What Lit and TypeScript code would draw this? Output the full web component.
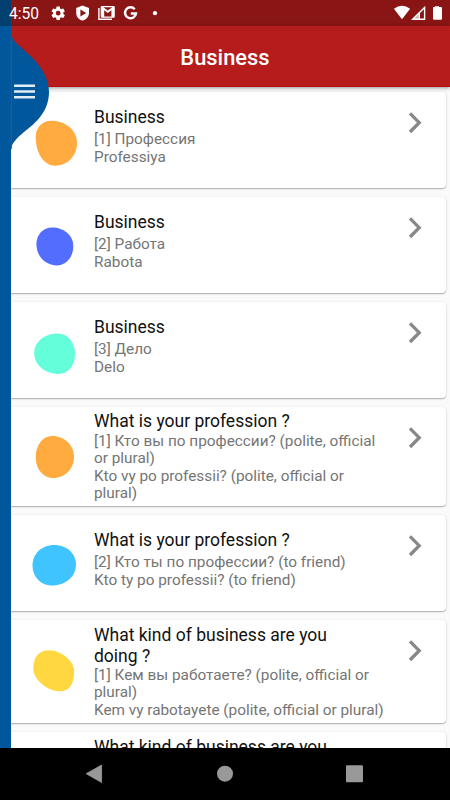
import { LitElement, html, css, svg } from "lit";
import { customElement, property } from "lit/decorators.js";

interface Blob {
  color: string;
  box: [number, number, number, number];
  tips: [number, number, number, number];
  k?: [number, number];
}

interface Phrase {
  title: string[];
  lines: string[];
  layout: string;
  blob?: Blob;
}

const PHRASES: Phrase[] = [
  {
    title: ["Business"], lines: ["[1] Профессия", "Professiya"], layout: "roomy",
    blob: { color: "#ffab40", box: [24.7, 28.8, 66, 73.7], tips: [40, 51, 44, 45] },
  },
  {
    title: ["Business"], lines: ["[2] Работа", "Rabota"], layout: "roomy",
    blob: { color: "#536dfe", box: [25.4, 30.4, 62.3, 68.4], tips: [41, 49, 46, 47] },
  },
  {
    title: ["Business"], lines: ["[3] Дело", "Delo"], layout: "roomy",
    blob: { color: "#64ffda", box: [23.2, 31.4, 64, 72], tips: [47, 52, 48, 51] },
  },
  {
    title: ["What is your profession ?"],
    lines: ["[1] Кто вы по профессии? (polite, official", "or plural)", "Kto vy po professii? (polite, official or", "plural)"],
    layout: "four",
    blob: { color: "#ffab40", box: [24.7, 28.9, 63, 71], tips: [41, 50, 42, 50] },
  },
  {
    title: ["What is your profession ?"],
    lines: ["[2] Кто ты по профессии? (to friend)", "Kto ty po professii? (to friend)"], layout: "roomy",
    blob: { color: "#40c4ff", box: [21.5, 30, 65, 70.5], tips: [43, 49.5, 41, 50.5] },
  },
  {
    title: ["What kind of business are you", "doing ?"],
    lines: ["[1] Кем вы работаете? (polite, official or", "plural)", "Kem vy rabotayete (polite, official or plural)"],
    layout: "five",
    blob: { color: "#ffd740", box: [22.3, 30.2, 63.2, 71.2], tips: [38, 51.4, 49, 48.4], k: [0.48, 0.64] },
  },
  { title: ["What kind of business are you"], lines: [], layout: "five" },
];

/** Closed curve through the four extreme points of a lopsided disc. */
function blobPath({ box: [l, t, r, b], tips: [tx, ry, bx, ly], k }: Blob): string {
  const [a, c] = k ?? [0.57, 0.57];
  return `M${tx} ${t}
    C${tx + (r - tx) * a} ${t} ${r} ${ry - (ry - t) * a} ${r} ${ry}
    C${r} ${ry + (b - ry) * c} ${bx + (r - bx) * c} ${b} ${bx} ${b}
    C${bx - (bx - l) * a} ${b} ${l} ${ly + (b - ly) * a} ${l} ${ly}
    C${l} ${ly - (ly - t) * c} ${tx - (tx - l) * c} ${t} ${tx} ${t}Z`;
}

@customElement("phrase-card")
class PhraseCard extends LitElement {
  @property({ attribute: false }) phrase!: Phrase;

  static styles = css`
    :host { display: block; }
    .card {
      display: grid;
      grid-template-columns: 83px 1fr 52px;
      height: 96.25px;
      background: #fff;
      border-radius: 0 4px 4px 0;
      box-shadow: 0 1px 1.5px rgba(0, 0, 0, 0.3), 0 0 2px rgba(0, 0, 0, 0.08);
    }
    .card.four { height: 99.2px; }
    .card.five { height: 103.4px; }
    .avatar { width: 83px; height: 90px; }
    .text { padding-top: 14.9px; white-space: nowrap; }
    .four .text { padding-top: 4.1px; }
    .five .text { padding-top: 4.6px; }
    .title { font-size: 17.5px; line-height: 20.6px; color: #111; }
    .five .title { line-height: 21px; }
    .sub { font-size: 15.33px; line-height: 17.5px; color: #757575; padding-top: 4px; }
    .four .sub { padding-top: 1.2px; }
    .five .sub { padding-top: 0; }
    .arrow { width: 28px; height: 28px; margin-top: 17px; }
  `;

  render() {
    const p = this.phrase;
    return html`
      <div class="card ${p.layout}">
        <svg class="avatar" viewBox="0 0 83 90">
          ${p.blob ? svg`<path fill=${p.blob.color} d=${blobPath(p.blob)}></path>` : null}
        </svg>
        <div class="text">
          <div class="title">${p.title.map((t) => html`<div>${t}</div>`)}</div>
          <div class="sub">${p.lines.map((t) => html`<div>${t}</div>`)}</div>
        </div>
        <svg class="arrow" viewBox="0 0 28 28">
          <path d="M16 4.4 L25.2 13.7 L16 23" fill="none" stroke="#888" stroke-width="3.3"></path>
        </svg>
      </div>
    `;
  }
}

@customElement("app-root")
class AppRoot extends LitElement {
  static styles = css`
    :host {
      display: block;
      position: relative;
      width: 450px;
      height: 800px;
      overflow: hidden;
      font-family: Roboto, "Noto Sans", sans-serif;
      background: #fafafa;
    }
    .screen { display: flex; flex-direction: column; height: 800px; }
    .status {
      height: 26px;
      display: flex;
      align-items: center;
      background: #8a1515;
      color: #fff;
    }
    .clock { position: relative; z-index: 2; width: 42px; padding-left: 9px; font-size: 15.6px; line-height: 26px; padding-top: 2px; }
    .status-icons { width: 399px; height: 26px; flex: none; }
    .bar {
      height: 61px;
      flex: none;
      box-sizing: border-box;
      background: #b71c1c;
      border-bottom: 1px solid #b90c0c;
      box-shadow: 0 1px 4px rgba(0, 0, 0, 0.4);
      display: flex;
      align-items: center;
      justify-content: center;
      color: #fff;
      font-size: 21.9px;
      font-weight: 500;
      padding-top: 2px;
      position: relative;
    }
    .list {
      flex: 1;
      min-height: 0;
      overflow: hidden;
      display: flex;
      flex-direction: column;
      gap: 8.75px;
      padding: 5px 4.5px 0 11px;
    }
    .list phrase-card { flex: none; }
    .nav { height: 52px; flex: none; background: #000; position: relative; }
    .nav svg { display: block; }
    .drawer { position: absolute; left: 0; top: 0; width: 60px; height: 748px; z-index: 1; }
  `;

  render() {
    return html`
      <div class="screen">
        <div class="status">
          <div class="clock">4:50</div>
          <svg class="status-icons" viewBox="51 0 399 26">
            <g transform="translate(50.1 5.1) scale(.675)" fill="#fff">
              <path d="M19.43 12.98c.04-.32.07-.64.07-.98s-.03-.66-.07-.98l2.11-1.65c.19-.15.24-.42.12-.64l-2-3.46c-.12-.22-.39-.3-.61-.22l-2.49 1c-.52-.4-1.08-.73-1.69-.98l-.38-2.65A.49.49 0 0 0 14 2h-4c-.25 0-.46.18-.49.42l-.38 2.65c-.61.25-1.17.59-1.69.98l-2.49-1c-.23-.09-.49 0-.61.22l-2 3.46c-.13.22-.07.49.12.64l2.11 1.65c-.04.32-.07.65-.07.98s.03.66.07.98l-2.11 1.65c-.19.15-.24.42-.12.64l2 3.46c.12.22.39.3.61.22l2.49-1c.52.4 1.08.73 1.69.98l.38 2.65c.03.24.24.42.49.42h4c.25 0 .46-.18.49-.42l.38-2.65c.61-.25 1.17-.59 1.69-.98l2.49 1c.23.09.49 0 .61-.22l2-3.46c.12-.22.07-.49-.12-.64l-2.11-1.65zM12 15.5a3.5 3.5 0 1 1 0-7 3.5 3.5 0 0 1 0 7z"></path>
            </g>
            <path fill="#fff" fill-rule="evenodd" d="M82.5 5.6 L89 8 V13 C89 16.6 86.3 19.6 82.5 20.6 C78.7 19.6 76.2 16.6 76.2 13 V8Z M80.4 9.4 V16.4 L86.2 12.9Z"></path>
            <path fill="none" stroke="#fff" stroke-width="1.4" d="M98.9 8 V19.3 H112"></path>
            <path fill="#fff" fill-rule="evenodd" d="M102 6 H113.5 Q114.8 6 114.8 7.3 V16.5 Q114.8 17.8 113.5 17.8 H102 Q100.7 17.8 100.7 16.5 V7.3 Q100.7 6 102 6Z M103.3 7.2 H112.3 L107.8 10.4Z M104.2 10.2 V16.4 H111.4 V10.2 L107.8 12.9Z"></path>
            <path fill="none" stroke="#fff" stroke-width="2.5" d="M134.7 9.2 A5.5 5.5 0 1 0 136 13.4 H130.8"></path>
            <circle cx="155" cy="13.2" r="2.1" fill="#fff"></circle>
            <path fill="#fff" d="M393.9 8.7 Q402 3 410.1 8.7 L402 19.3Z"></path>
            <path fill="#d7b0b0" d="M413 19 L418.9 12.9 V19Z"></path>
            <path fill="none" stroke="#fff" stroke-width="1.4" d="M412.7 19.2 L424.6 7.5 V19.2Z M419.3 13 V19"></path>
            <path fill="#fff" d="M435 7 V6.2 H439 V7 H440.9 Q442 7 442 8.1 V18.7 Q442 19.8 440.9 19.8 H434.1 Q433 19.8 433 18.7 V8.1 Q433 7 434.1 7Z"></path>
          </svg>
        </div>
        <div class="bar">Business</div>
        <div class="list">
          ${PHRASES.map((p) => html`<phrase-card .phrase=${p}></phrase-card>`)}
        </div>
        <div class="nav">
          <svg width="450" height="52" viewBox="0 748 450 52" fill="#999">
            <path d="M86.2 773.7 L101.6 765 V782.5Z" stroke="#999" stroke-width=".8" stroke-linejoin="round"></path>
            <circle cx="225" cy="773.7" r="8"></circle>
            <rect x="346" y="765.2" width="17" height="17" rx="1"></rect>
          </svg>
        </div>
      </div>
      <svg class="drawer" viewBox="0 0 60 748">
        <path fill="#01579b" d="M0 0 H11 V34 C12 39 16 43 21 47.5 C34 58 49 73 49 92 C49 111 36 123 24 132 C17 138 11.5 143 11 150 V748 H0Z"></path>
        <path fill="#02406f" d="M0 0 H11 V26 H0Z"></path>
        <path stroke="#2a5c98" stroke-width="1" d="M11.3 36 V149"></path>
        <path stroke="#e4edf5" stroke-width="2.4" d="M14 85.7 H35 M14 91.5 H35 M14 97.3 H35"></path>
      </svg>
    `;
  }
}
